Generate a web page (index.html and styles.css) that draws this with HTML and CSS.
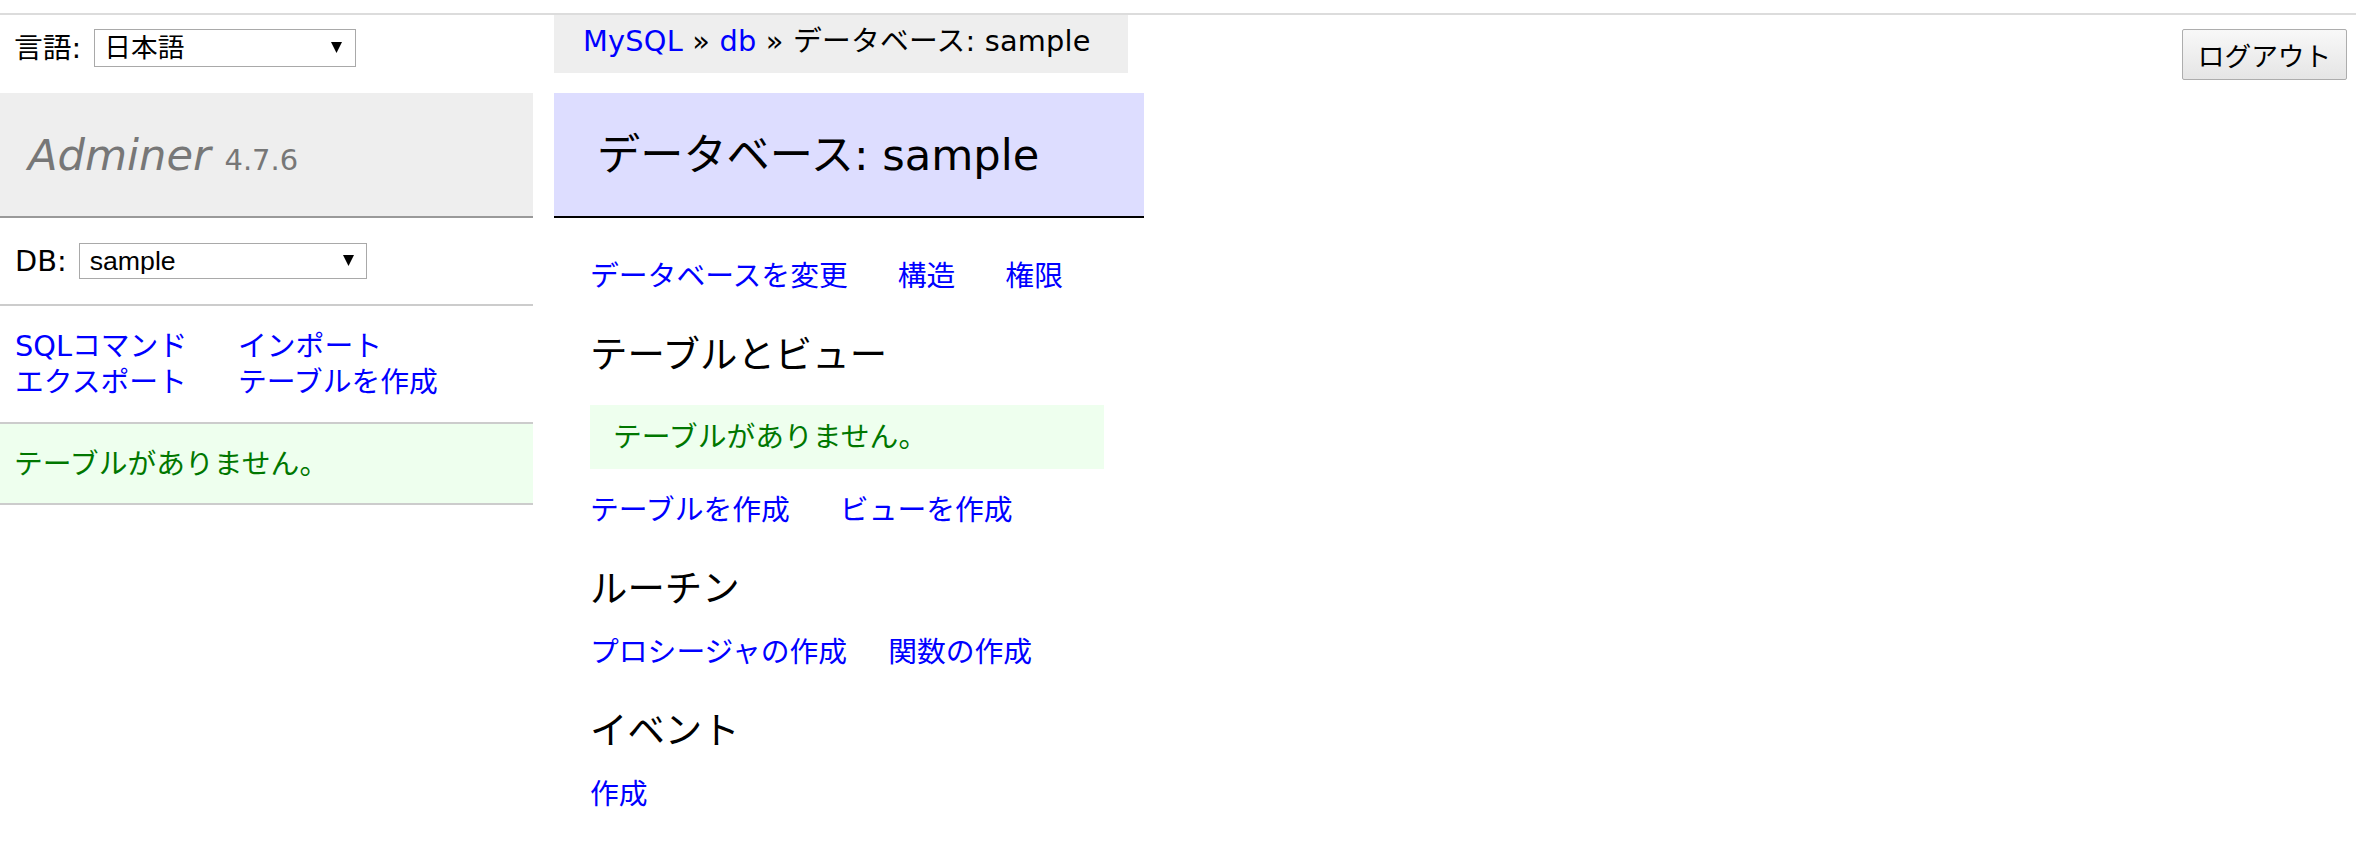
FILE: index.html
```html
<!DOCTYPE html>
<html lang="ja">
<head>
<meta charset="utf-8">
<title>データベース: sample - Adminer</title>
<link rel="stylesheet" href="styles.css">
</head>
<body>
<div class="topline"></div>
<div class="page">
  <aside class="menu">
    <form class="lang">
      <label class="field-label" for="lang">言語:</label>
      <span class="select-wrap lang-select">
        <select id="lang"><option>日本語</option></select>
        <svg class="arrow" viewBox="0 0 11 11" aria-hidden="true"><polygon points="0,0 11,0 5.5,11"/></svg>
      </span>
    </form>
    <h1 class="brand"><a class="brand-name" href="#">Adminer</a> <span class="version">4.7.6</span></h1>
    <p class="dbs">
      <label class="field-label" for="db">DB:</label>
      <span class="select-wrap db-select">
        <select id="db"><option>sample</option></select>
        <svg class="arrow" viewBox="0 0 11 11" aria-hidden="true"><polygon points="0,0 11,0 5.5,11"/></svg>
      </span>
    </p>
    <p class="menu-links">
      <a href="#">SQLコマンド</a>
      <a href="#">インポート</a>
      <a href="#">エクスポート</a>
      <a href="#">テーブルを作成</a>
    </p>
    <p class="tables-msg">テーブルがありません。</p>
  </aside>

  <main class="content">
    <div class="breadcrumb"><a href="#">MySQL</a> » <a href="#">db</a> » データベース: sample</div>
    <h2 class="title">データベース: sample</h2>
    <div class="inner">
      <p class="links links-top"><a href="#">データベースを変更</a><a href="#">構造</a><a href="#">権限</a></p>
      <h3 class="section">テーブルとビュー</h3>
      <p class="message">テーブルがありません。</p>
      <p class="links links-after-msg"><a href="#">テーブルを作成</a><a href="#">ビューを作成</a></p>
      <h3 class="section">ルーチン</h3>
      <p class="links links-after-h3 tight"><a href="#">プロシージャの作成</a><a href="#">関数の作成</a></p>
      <h3 class="section">イベント</h3>
      <p class="links links-after-h3"><a href="#">作成</a></p>
    </div>
  </main>

  <div class="logout-wrap">
    <button class="logout" type="button">ログアウト</button>
  </div>
</div>
</body>
</html>
```

FILE: styles.css
```css
* { box-sizing: border-box; }

html, body {
  margin: 0;
  padding: 0;
  background: #fff;
}

body {
  font-family: "DejaVu Sans", "Noto Sans CJK JP", sans-serif;
  font-size: 28.8px;
  line-height: 36px;
  color: #000;
}

a {
  color: #00f;
  text-decoration: none;
}

.topline {
  height: 2px;
  margin-top: 13px;
  background: #dcdcdc;
}

.page {
  display: flex;
  align-items: flex-start;
}

/* ---------- sidebar ---------- */
.menu {
  width: 533px;
  flex: none;
}

.lang {
  display: flex;
  align-items: center;
  gap: 13px;
  height: 52px;
  margin: 0;
  padding: 14px 0 0 14px;
}

.field-label {
  white-space: nowrap;
}

.select-wrap {
  position: relative;
  display: block;
}

.select-wrap select {
  -webkit-appearance: none;
  appearance: none;
  display: block;
  width: 100%;
  height: 100%;
  margin: 0;
  border: 1px solid #a9a9a9;
  border-radius: 0;
  background: #fff;
  color: #000;
  font-family: "Liberation Sans", "Noto Sans CJK JP", sans-serif;
  font-size: 26.7px;
  line-height: 1;
}

.select-wrap .arrow {
  position: absolute;
  width: 11px;
  height: 11px;
  fill: #000;
  pointer-events: none;
}

.lang-select {
  width: 262px;
  height: 38px;
}

.lang-select select {
  padding: 0 0 0 9px;
}

.lang-select .arrow {
  right: 14px;
  top: 13px;
}

.db-select {
  width: 288px;
  height: 36px;
}

.db-select select {
  padding: 0 0 0 10px;
}

.db-select .arrow {
  right: 13px;
  top: 12px;
}

.brand {
  margin: 26px 0 0;
  padding: 34.5px 0 34.5px 28px;
  font-size: 43.2px;
  line-height: 54px;
  font-weight: normal;
  color: #777;
  background: #eee;
  border-bottom: 2px solid #999;
  white-space: nowrap;
}

.brand-name {
  color: #777;
  font-style: italic;
}

.version {
  font-size: 67%;
  line-height: 1;
  color: #777;
}

.dbs {
  display: flex;
  align-items: center;
  gap: 12px;
  margin: 0;
  padding: 25px 0 25px 15px;
  border-bottom: 2px solid #ccc;
}

.menu-links {
  display: grid;
  grid-template-columns: 223px auto;
  margin: 0;
  padding: 22px 15px;
  border-bottom: 2px solid #ccc;
}

.menu-links a {
  white-space: nowrap;
}

.tables-msg {
  margin: 0;
  padding: 21.5px 14px;
  background: #efe;
  color: #070;
  border-bottom: 2px solid #ccc;
}

/* ---------- content ---------- */
.content {
  flex: none;
  width: 590px;
  margin-left: 21px;
}

.breadcrumb {
  width: fit-content;
  height: 58px;
  padding: 0 37px 0 29px;
  line-height: 52px;
  background: #eee;
  white-space: nowrap;
  letter-spacing: 0.2px;
}

.title {
  margin: 20px 0 40px;
  padding: 34.5px 43px;
  font-size: 43.2px;
  line-height: 54px;
  font-weight: normal;
  background: #ddf;
  border-bottom: 2px solid #000;
  white-space: nowrap;
}

.inner {
  padding-left: 36px;
}

.links {
  display: flex;
  gap: 50px;
  margin: 0;
  white-space: nowrap;
}

.links.tight {
  gap: 41px;
}

.section {
  margin: 37.6px 0 0;
  font-size: 37.44px;
  line-height: 46.8px;
  font-weight: normal;
}

.message {
  margin: 26.6px 40px 0 0;
  padding: 14px 23px;
  background: #efe;
  color: #070;
}

.links-after-msg {
  margin-top: 23px;
}

.links-after-h3 {
  margin-top: 21.6px;
}

/* ---------- logout ---------- */
.logout-wrap {
  margin-left: auto;
  padding: 14px 9px 0 0;
}

.logout {
  display: block;
  width: 165px;
  height: 51px;
  padding: 0;
  margin: 0;
  font-family: "Noto Sans CJK JP", sans-serif;
  font-size: 26.7px;
  color: #000;
  border: 1px solid #adadad;
  border-radius: 2px;
  background: linear-gradient(#f8f8f8, #e5e5e5);
}
```
